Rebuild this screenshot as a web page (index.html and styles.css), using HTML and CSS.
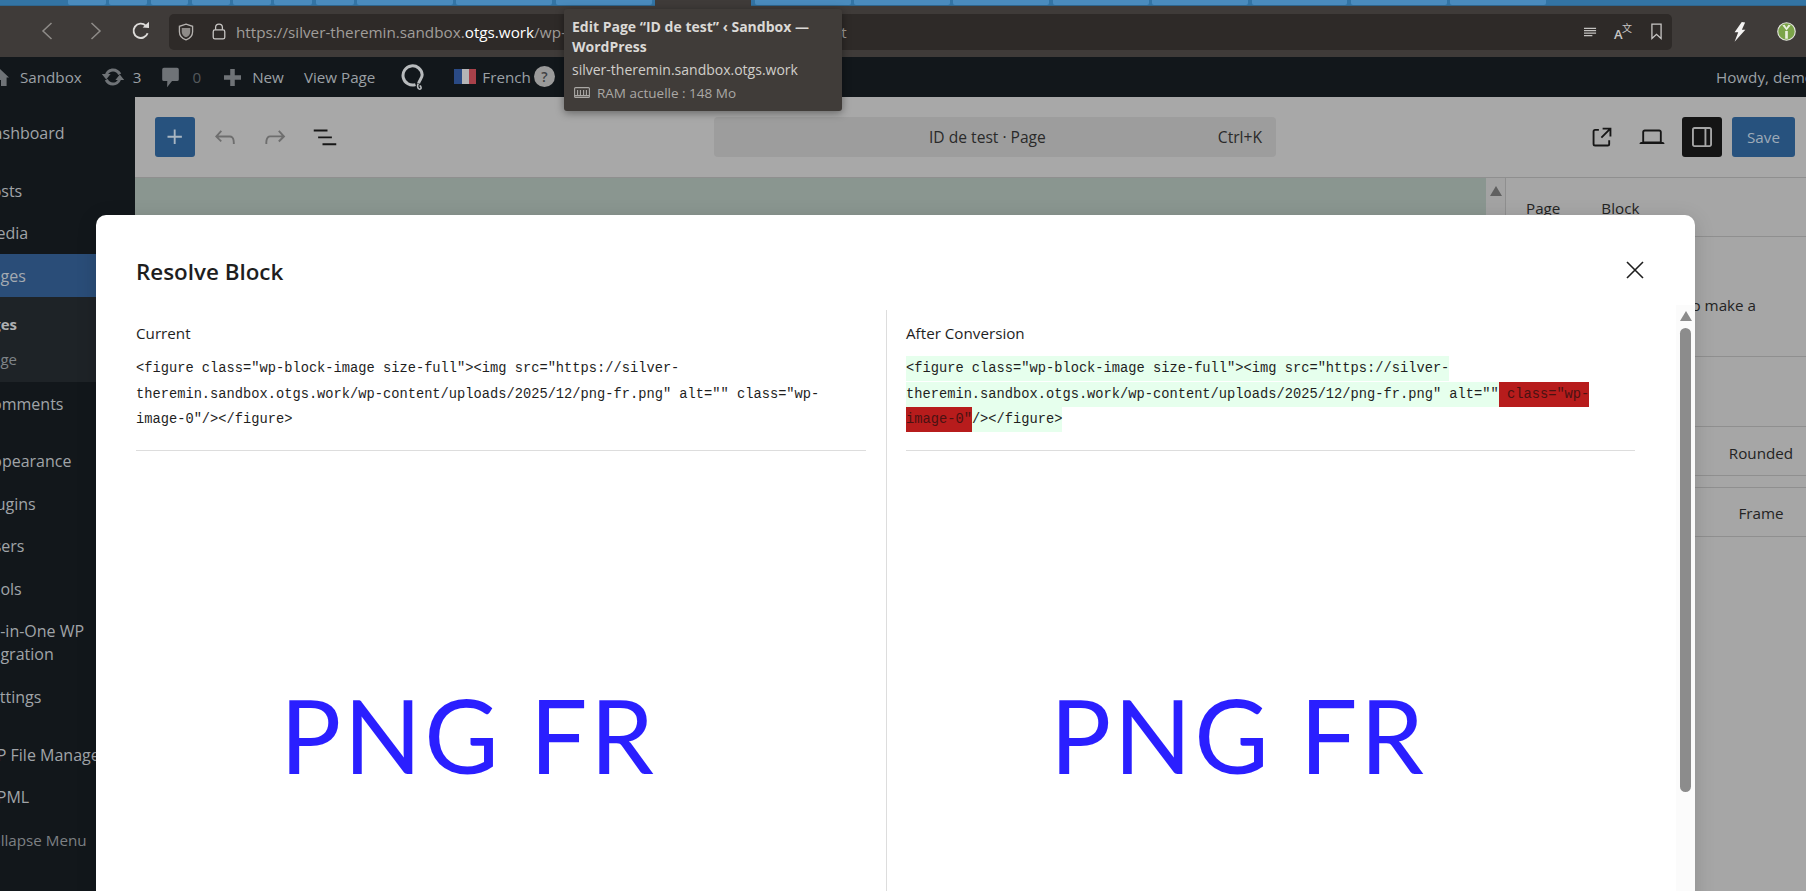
FILE: index.html
```html
<!DOCTYPE html>
<html lang="en">
<head>
<meta charset="utf-8">
<title>Resolve Block</title>
<link rel="stylesheet" href="styles.css">
</head>
<body>
<div class="screen">
  <div class="tabstrip">
    <i class="tab narrow"></i><i class="tab narrow"></i><i class="tab narrow"></i><i class="tab narrow"></i><i class="tab narrow"></i><i class="tab narrow"></i><i class="tab narrow"></i>
    <i class="tab"></i><i class="tab"></i><i class="tab"></i><i class="tab active"></i><i class="tab"></i><i class="tab"></i><i class="tab"></i><i class="tab"></i><i class="tab"></i><i class="tab"></i><i class="tab"></i><i class="tab"></i>
  </div>

  <div class="toolbar">
    <svg class="nav back" viewBox="0 0 12 18"><polyline points="10.5,1 2,9 10.5,17"/></svg>
    <svg class="nav forward" viewBox="0 0 12 18"><polyline points="1.5,1 10,9 1.5,17"/></svg>
    <svg class="reload" viewBox="0 0 20 20"><path d="M16.6 12.2A7.2 7.2 0 1 1 14.8 4.6"/><path class="solid" d="M11.6 6.6 L18 7 L18 0.8 Z"/></svg>
    <div class="urlbar">
      <svg class="shield" viewBox="0 0 18 20"><path d="M9 1.2 16.4 3.6V9.6C16.4 14 13.2 17.2 9 18.8 4.8 17.2 1.6 14 1.6 9.6V3.6Z"/><path class="solid" d="M4.2 5.4 13.8 5.4V9.6C13.8 12.6 11.8 14.8 9 16 6.2 14.8 4.2 12.6 4.2 9.6Z"/></svg>
      <svg class="lock" viewBox="0 0 16 20"><rect x="1.2" y="8.2" width="13.6" height="10.6" rx="2"/><path d="M4 8V5.2a4 4 0 0 1 8 0V8"/></svg>
      <span class="url">https://silver-theremin.sandbox.<b>otgs.work</b><span class="url-path">/wp-admin/post.php?post=123&amp;action=edit</span></span>
      <span class="url-tools">
        <svg class="reader" viewBox="0 0 14 10"><path d="M0 1h13M0 3.6h13M0 6.2h13M0 8.8h9"/></svg>
        <span class="translate"><span class="tr-a">A</span><span class="tr-b">文</span></span>
        <svg class="bookmark" viewBox="0 0 12 18"><path d="M1 1H11V16.6L6 12 1 16.6Z"/></svg>
      </span>
    </div>
    <span class="ext-tools">
      <svg class="bolt" viewBox="0 0 14 22"><path d="M9.5 0 13.2 0.6 9.6 8.4 13.4 8.4 1.6 21.6 5.6 11.2 1.6 11.2Z"/></svg>
      <svg class="ext-green" viewBox="0 0 20 20"><circle cx="10" cy="10" r="9.2"/><path d="M5.6 3.4 10 9 14.4 3.4 12 3 10 6 8 3ZM8.6 9.4H11.4V17.6H8.6Z"/></svg>
    </span>
  </div>

  <div class="adminbar">
    <svg class="ab-house" viewBox="0 0 20 20"><path d="M10 1 20 10.4 17.6 10.4 17.6 19 12 19 12 13 8 13 8 19 2.4 19 2.4 10.4 0 10.4Z"/></svg>
    <span class="ab-text site">Sandbox</span>
    <svg class="ab-update" viewBox="0 0 24 20"><path d="M12 1.6C8.4 1.6 5.4 3.8 4.2 7L0.8 7 5.2 12.4 9.6 7 7.2 7C8.2 5.4 10 4.4 12 4.4 14.4 4.4 16.4 5.8 17.2 8L20.2 6.6C18.8 3.6 15.6 1.6 12 1.6ZM18.8 7.6 14.4 13 16.8 13C15.8 14.6 14 15.6 12 15.6 9.6 15.6 7.6 14.2 6.8 12L3.8 13.4C5.2 16.4 8.4 18.4 12 18.4 15.6 18.4 18.6 16.2 19.8 13L23.2 13Z"/></svg>
    <span class="ab-text count">3</span>
    <svg class="ab-comment" viewBox="0 0 18 22"><path d="M2 0.8H16A1.8 1.8 0 0 1 17.8 2.6V13A1.8 1.8 0 0 1 16 14.8H10.6L5.4 21.4 5.6 14.8H2A1.8 1.8 0 0 1 .2 13V2.6A1.8 1.8 0 0 1 2 .8Z"/></svg>
    <span class="ab-text count dim">0</span>
    <svg class="ab-plus" viewBox="0 0 18 18"><path d="M6.6 0H11.4V6.6H18V11.4H11.4V18H6.6V11.4H0V6.6H6.6Z"/></svg>
    <span class="ab-text new">New</span>
    <span class="ab-text view">View Page</span>
    <svg class="ab-q" viewBox="0 0 24 27"><path d="M14.5 20.6A9.6 9.6 0 1 1 21.2 10.8C21.2 14 18.4 16.4 17.6 19.4"/><path class="thin" d="M17.4 19.6C16 21 16.4 25 18.6 25.2 20.8 25.2 20.4 22 18.6 21.6"/></svg>
    <span class="flag"><i class="flag-b"></i><i class="flag-w"></i><i class="flag-r"></i></span>
    <span class="ab-text lang">French</span>
    <span class="help">?</span>
    <span class="ab-text howdy">Howdy, demo</span>
  </div>

  <div class="workspace">
    <nav class="sidebar">
      <div class="menu-list">
        <div class="item sep">Dashboard</div>
        <div class="item">Posts</div>
        <div class="item">Media</div>
        <div class="item current">Pages</div>
        <div class="submenu">
          <div class="sub-item strong">All Pages</div>
          <div class="sub-item">Add Page</div>
        </div>
        <div class="item sep">Comments</div>
        <div class="item">Appearance</div>
        <div class="item">Plugins</div>
        <div class="item">Users</div>
        <div class="item">Tools</div>
        <div class="item tall">All-in-One WP<br>Migration</div>
        <div class="item sep">Settings</div>
        <div class="item">WP File Manager</div>
        <div class="item">WPML</div>
        <div class="item collapse">Collapse Menu</div>
      </div>
    </nav>

    <main class="editor">
      <header class="editor-head">
        <div class="head-left">
          <span class="inserter"><svg viewBox="0 0 24 24"><path d="M11 12.5V17.5H12.5V12.5H17.5V11H12.5V6H11V11H6V12.5H11Z"/></svg></span>
          <span class="tool muted"><svg viewBox="0 0 24 24"><path d="M18.3 11.7c-.6-.6-1.4-.9-2.3-.9H6.7l2.9-3.3-1.1-1-4.5 5L8.5 16l1-1-2.7-2.7H16c.5 0 .9.2 1.3.5 1 1 1 3.4 1 4.5v.3h1.5v-.2c0-1.5 0-4.3-1.5-5.7z"/></svg></span>
          <span class="tool muted"><svg viewBox="0 0 24 24"><path d="M15.6 6.5l-1.1 1 2.9 3.3H8c-.9 0-1.7.3-2.3.9-1.4 1.5-1.4 4.2-1.4 5.6v.2h1.5v-.3c0-1.1 0-3.5 1-4.5.3-.3.7-.5 1.3-.5h9.2L14.5 15l1.1 1.1 4.6-4.6-4.6-5z"/></svg></span>
          <span class="tool"><svg viewBox="0 0 24 24"><path d="M3 6h11v1.5H3V6zm3.5 5.5h11V13h-11v-1.5zM21 17H10v1.5h11V17z"/></svg></span>
        </div>
        <div class="command">
          <span class="command-title">ID de test · Page</span>
          <span class="command-key">Ctrl+K</span>
        </div>
        <div class="head-right">
          <span class="tool"><svg viewBox="0 0 24 24"><path d="M19.5 4.5h-7V6h4.44l-5.97 5.97 1.06 1.06L18 7.06v4.44h1.5v-7Zm-13 1a2 2 0 0 0-2 2v10a2 2 0 0 0 2 2h10a2 2 0 0 0 2-2v-3H17v3a.5.5 0 0 1-.5.5h-10a.5.5 0 0 1-.5-.5v-10a.5.5 0 0 1 .5-.5h3V5.5h-3Z"/></svg></span>
          <span class="tool"><svg viewBox="0 0 24 24"><path d="M20.5 16h-.7V8c0-1.1-.9-2-2-2H6.2c-1.1 0-2 .9-2 2v8h-.7c-.8 0-1.5.7-1.5 1.5h20c0-.8-.7-1.5-1.5-1.5zM5.7 8c0-.3.2-.5.5-.5h11.6c.3 0 .5.2.5.5v7.6H5.7V8z"/></svg></span>
          <span class="tool pressed"><svg viewBox="0 0 24 24"><path d="M18 4H6c-1.1 0-2 .9-2 2v12c0 1.1.9 2 2 2h12c1.1 0 2-.9 2-2V6c0-1.1-.9-2-2-2zm-4 14.5H6c-.3 0-.5-.2-.5-.5V6c0-.3.2-.5.5-.5h8v13zm4.5-.5c0 .3-.2.5-.5.5h-2.5v-13H18c.3 0 .5.2.5.5v12z"/></svg></span>
          <span class="save">Save</span>
        </div>
      </header>
      <div class="editor-body">
        <div class="canvas"></div>
        <div class="canvas-scroll"><i class="arrow-up dark"></i></div>
        <aside class="panel">
          <div class="panel-tabs"><span>Page</span><span>Block</span></div>
          <p class="panel-note">Add a title to make a</p>
          <div class="panel-gap"></div>
          <div class="panel-style">Rounded</div>
          <div class="panel-style second">Frame</div>
        </aside>
      </div>
    </main>
  </div>

  <section class="modal">
    <div class="modal-head">
      <h1>Resolve Block</h1>
      <svg class="close" viewBox="0 0 18 18"><path d="M1 1 17 17M17 1 1 17"/></svg>
    </div>
    <div class="compare">
      <div class="col">
        <div class="col-label">Current</div>
        <div class="code">&lt;figure class="wp-block-image size-full"&gt;&lt;img src="https://silver-theremin.sandbox.otgs.work/wp-content/uploads/2025/12/png-fr.png" alt="" class="wp-image-0"/&gt;&lt;/figure&gt;</div>
        <div class="preview">PNG FR</div>
      </div>
      <div class="col after">
        <div class="col-label">After Conversion</div>
        <div class="code"><span class="same">&lt;figure class="wp-block-image size-full"&gt;&lt;img src="https://silver-theremin.sandbox.otgs.work/wp-content/uploads/2025/12/png-fr.png" alt=""</span><span class="removed"> class="wp-image-0"</span><span class="same">/&gt;&lt;/figure&gt;</span></div>
        <div class="preview">PNG FR</div>
      </div>
    </div>
    <div class="modal-scroll"><i class="arrow-up"></i><i class="thumb"></i></div>
  </section>

  <div class="tooltip">
    <div class="tip-title">Edit Page “ID de test” ‹ Sandbox — WordPress</div>
    <div class="tip-url">silver-theremin.sandbox.otgs.work</div>
    <div class="tip-ram">
      <svg viewBox="0 0 16 12"><rect x=".6" y=".6" width="14.8" height="9.8" rx="1"/><path d="M3.6 3v5M6.4 3v5M9.6 3v5M12.4 3v5M.6 8.6h14.8"/></svg>
      <span>RAM actuelle : 148 Mo</span>
    </div>
  </div>
</div>
</body>
</html>
```
FILE: styles.css
```css
* { box-sizing: border-box; }
html, body { margin: 0; height: 100%; overflow: hidden; background: #12171b; }
body { font-family: "Open Sans", "Noto Sans", sans-serif; }
.screen { position: relative; width: 1806px; height: 891px; overflow: hidden; display: flex; flex-direction: column; }
svg { display: block; flex: none; }

/* Browser tab strip */
.tabstrip { height: 6px; flex: none; display: flex; gap: 3.5px; padding-left: 68px; background: #3374a4; border-bottom: 1px solid #2e668f; }
.tab { display: block; width: 95.9px; height: 5px; background: #4a8bbd; border-radius: 0 0 2px 2px; }
.tab.narrow { width: 37.8px; }
.tab.active { background: #3f3b39; height: 6px; border-radius: 0; }

/* Browser toolbar */
.toolbar { height: 51px; flex: none; display: flex; align-items: center; background: #3f3b39; position: relative; }
.nav { width: 12px; height: 18px; fill: none; stroke: #8f8c89; stroke-width: 1.5; margin-top: -2px; }
.back { margin-left: 41px; }
.forward { margin-left: 37px; }
.reload { width: 20px; height: 20px; margin-left: 29px; fill: none; stroke: #dedcda; stroke-width: 1.9; margin-top: -2px; }
.reload .solid { fill: #dedcda; stroke: none; }
.urlbar { width: 1503px; height: 36px; margin-left: 18px; display: flex; align-items: center; background: #2e2a28; border-radius: 5px; }
.shield { width: 16px; height: 18px; margin-left: 9px; fill: none; stroke: #b4b1ae; stroke-width: 1.5; }
.shield .solid { fill: #8e8b88; stroke: none; }
.lock { width: 14px; height: 17px; margin-left: 18px; fill: none; stroke: #c9c7c5; stroke-width: 1.5; }
.url { margin-left: 10px; font-size: 15.25px; color: #a09d9a; white-space: nowrap; }
.url b { font-weight: 400; color: #fff; }
.url-path { letter-spacing: .1px; }
.url-tools { margin-left: auto; display: flex; align-items: center; }
.reader { width: 13px; height: 10px; fill: none; stroke: #c4c2c0; stroke-width: 1.3; }
.translate { position: relative; display: block; width: 18px; height: 19px; margin-left: 17px; color: #c8c6c4; }
.tr-a { position: absolute; left: 0; bottom: 0; font-size: 13px; line-height: 13px; font-weight: 600; }
.tr-b { position: absolute; right: 0; top: 0; font-size: 10px; line-height: 11px; font-family: "Noto Sans CJK SC", sans-serif; }
.bookmark { width: 11px; height: 17px; margin-left: 19px; margin-right: 10px; fill: none; stroke: #c9c7c5; stroke-width: 1.4; }
.ext-tools { display: flex; align-items: center; }
.bolt { width: 13px; height: 20px; margin-left: 61px; fill: #f4f3f2; }
.ext-green { width: 19px; height: 19px; margin-left: 31px; }
.ext-green circle { fill: #7ba449; stroke: #e4e4e0; stroke-width: 1.2; }
.ext-green path { fill: #e9efdf; }

/* WordPress admin bar */
.adminbar { height: 40px; flex: none; display: flex; align-items: center; background: #12171b; color: #9ba0a5; }
.ab-text { font-size: 15.2px; white-space: nowrap; }
.ab-house { width: 20px; height: 20px; margin-left: -11px; fill: #6f7377; }
.site { margin-left: 11px; }
.ab-update { width: 24px; height: 20px; margin-left: 19px; fill: #6f7377; }
.count { margin-left: 8px; }
.dim { color: #54595d; margin-left: 13px; }
.ab-comment { width: 17px; height: 21px; margin-left: 21px; fill: #6f7377; }
.ab-plus { width: 17px; height: 17px; margin-left: 23px; fill: #6f7377; }
.new { margin-left: 11px; }
.view { margin-left: 20px; }
.ab-q { width: 24px; height: 27px; margin-left: 26px; fill: none; stroke: #b8bbbd; stroke-width: 3; }
.ab-q .thin { stroke-width: 1.6; }
.flag { display: flex; width: 22px; height: 15px; margin-left: 29px; margin-top: -2px; }
.flag i { display: block; flex: 1; }
.flag-b { background: #2a4a85; }
.flag-w { background: #b4b4b6; }
.flag-r { background: #a8414a; }
.lang { margin-left: 6px; }
.help { width: 21px; height: 21px; margin-left: 3px; border-radius: 50%; background: #9a9a9a; color: #3e4144; font-size: 14px; font-weight: 600; line-height: 21px; text-align: center; margin-top: -2px; }
.howdy { margin-left: auto; }
.ab-text.howdy { width: 90px; overflow: hidden; }

/* Layout below */
.workspace { flex: 1; display: flex; min-height: 0; }

/* Sidebar */
.sidebar { width: 135px; flex: none; background: #12171b; overflow: hidden; color: #a0a4a8; font-size: 16px; }
.menu-list { margin-left: -18px; padding-top: 14px; width: 153px; }
.item { height: 42.5px; line-height: 44px; white-space: nowrap; }
.item.sep { margin-bottom: 15px; }
.item.current { background: #2a4d78; color: #a4aab1; height: 43px; }
.item.tall { height: 66px; line-height: 23px; padding-top: 11px; }
.item.collapse { font-size: 15.2px; color: #7d8084; margin-top: 0; }
.submenu { height: 85px; background: #1e2327; padding-top: 10px; color: #7f8488; font-size: 15px; }
.sub-item { height: 35px; line-height: 35px; width: 35px; white-space: nowrap; display: flex; justify-content: flex-end; }
.sub-item.strong { font-weight: 700; color: #aeb0b2; }

/* Editor */
.editor { flex: 1; min-width: 0; display: flex; flex-direction: column; }
.editor-head { height: 81px; flex: none; display: flex; align-items: center; padding: 0 11px 1px 20px; background: #a8a8a8; border-bottom: 1px solid #8f8f8f; }
.head-left { display: flex; align-items: center; width: 559px; }
.inserter { width: 40px; height: 40px; background: #27527e; border-radius: 3px; display: flex; align-items: center; justify-content: center; }
.inserter svg { width: 30px; height: 30px; fill: #a9b6c2; }
.tool { width: 40px; height: 40px; margin-left: 10px; display: flex; align-items: center; justify-content: center; }
.tool svg { width: 30px; height: 30px; fill: #161616; }
.tool.muted svg { fill: #6e6e6e; }
.command { width: 562px; height: 40px; display: flex; align-items: center; padding: 0 14px 0 215px; background: #9d9d9d; border-radius: 4px; font-size: 15.6px; color: #2a2a2a; }
.command-key { margin-left: auto; }
.head-right { margin-left: auto; display: flex; align-items: center; }
.tool.pressed { background: #141414; border-radius: 3px; }
.tool.pressed svg { fill: #a5a5a5; }
.save { width: 63px; height: 40px; margin-left: 10px; background: #27527e; color: #9eabb8; border-radius: 3px; font-size: 15.2px; line-height: 40px; text-align: center; }
.editor-body { flex: 1; display: flex; min-height: 0; }
.canvas { flex: 1; background: #8a9690; }
.canvas-scroll { width: 20px; flex: none; background: #a3a3a3; border-right: 1px solid #8f8f8f; display: flex; flex-direction: column; align-items: center; padding-top: 8px; }
.panel { width: 300px; flex: none; background: #a6a6a6; color: #232323; font-size: 15.2px; }
.panel-tabs { height: 59px; display: flex; gap: 41px; padding: 19px 0 0 20px; border-bottom: 1px solid #8f8f8f; line-height: 22px; }
.panel-note { margin: 0; height: 120px; padding: 57px 50px 0 0; text-align: right; border-bottom: 1px solid #8f8f8f; line-height: 22px; }
.panel-gap { height: 70px; border-bottom: 1px solid #8f8f8f; }
.panel-style { height: 49px; padding-left: 222px; width: 300px; text-align: center; line-height: 52px; border-bottom: 1px solid #8f8f8f; padding-right: 12px; white-space: nowrap; }
.panel-style.second { margin-top: 11px; border-top: 1px solid #8f8f8f; height: 50px; line-height: 50px; }

/* Modal */
.modal { position: absolute; left: 96px; top: 215px; width: 1599px; height: 700px; background: #fff; border-radius: 10px 10px 0 0; box-shadow: 0 4px 20px rgba(0,0,0,.15); color: #1e1e1e; }
.modal-head { height: 95px; display: flex; align-items: flex-start; padding: 39px 0 0 40px; }
.modal-head h1 { margin: 0; font-size: 22.4px; line-height: 36px; font-weight: 600; width: 1490px; }
.close { width: 18px; height: 18px; margin-top: 7px; fill: none; stroke: #1e1e1e; stroke-width: 1.6; }
.compare { display: grid; grid-template-columns: 750px 769px; padding-left: 40px; height: 605px; }
.col { padding-top: 12px; width: 730px; }
.col.after { width: 769px; border-left: 1px solid #dddddd; padding-left: 19px; padding-right: 20px; }
.col-label { font-size: 15.2px; line-height: 22px; }
.code { margin-top: 12px; font-family: "Liberation Mono", "DejaVu Sans Mono", monospace; font-size: 13.73px; line-height: 25.5px; border-bottom: 1px solid #dddddd; height: 95px; }
.same { background: #e6ffed; padding: 5px 0; }
.removed { background: #b71c1c; color: #4a1212; padding: 5px 0; }
.preview { padding: 224px 0 0 144px; font-family: Lato, "Open Sans", sans-serif; font-size: 102px; letter-spacing: 2.5px; line-height: 120px; color: #2a1fff; white-space: nowrap; }
.modal-scroll { position: absolute; left: 1580px; top: 90px; width: 19px; height: 610px; background: #fbfbfb; display: flex; flex-direction: column; align-items: center; padding-top: 6px; }
.arrow-up { display: block; width: 0; height: 0; border-left: 6.5px solid transparent; border-right: 6.5px solid transparent; border-bottom: 10px solid #8c8c8c; }
.arrow-up.dark { border-bottom-color: #606060; }
.thumb { display: block; width: 11px; height: 464px; margin-top: 7px; background: #8c8c8c; border-radius: 6px; }

/* Browser tab tooltip */
.tooltip { position: absolute; left: 564px; top: 9px; width: 278px; height: 102px; padding: 8px 8px; background: #403c39; border-radius: 3px; box-shadow: 0 2px 8px rgba(0,0,0,.4); font-size: 14px; }
.tip-title { font-weight: 700; color: #dbd9d6; line-height: 20px; }
.tip-url { color: #d0ceca; line-height: 20px; margin-top: 3px; white-space: nowrap; }
.tip-ram { display: flex; align-items: center; color: #aaa8a5; line-height: 20px; margin-top: 3px; font-size: 13.5px; }
.tip-ram svg { width: 16px; height: 12px; margin: 0 7px 0 2px; fill: none; stroke: #aaa8a5; stroke-width: 1.1; }
```
